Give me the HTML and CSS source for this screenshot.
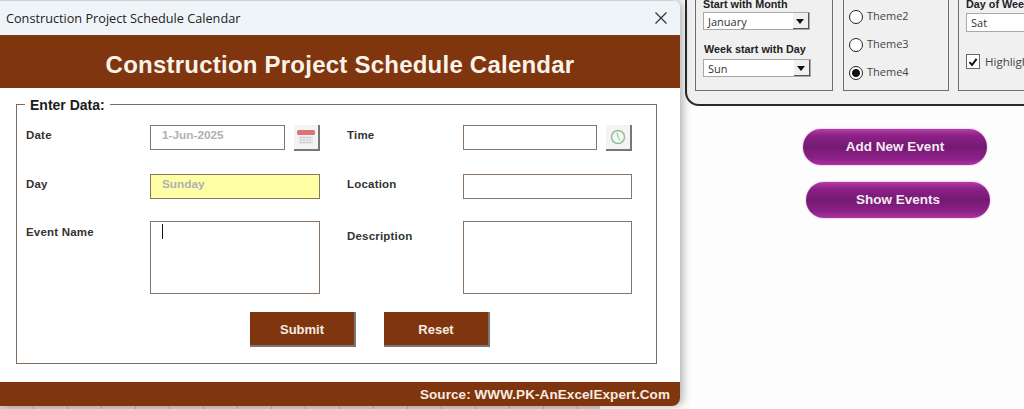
FILE: index.html
```html
<!DOCTYPE html>
<html lang="en">
<head>
<meta charset="utf-8">
<title>Construction Project Schedule Calendar</title>
<link rel="stylesheet" href="styles.css">
</head>
<body>
<div class="desk">
  <div class="sheet-strip"></div>

  <section class="panel">
    <div class="group group-month">
      <div class="cap">Start with Month</div>
      <div class="combo"><span>January</span><i class="drop"></i></div>
      <div class="cap cap-second">Week start with Day</div>
      <div class="combo combo-second"><span>Sun</span><i class="drop"></i></div>
    </div>
    <div class="group group-theme">
      <div class="radio"><i class="dot"></i><span class="radio-text">Theme2</span></div>
      <div class="radio"><i class="dot"></i><span class="radio-text">Theme3</span></div>
      <div class="radio"><i class="dot on"></i><span class="radio-text">Theme4</span></div>
    </div>
    <div class="group group-week">
      <div class="cap">Day of Week</div>
      <div class="combo combo-wide"><span>Sat</span></div>
      <div class="check"><i class="box"><svg width="10" height="10" viewBox="0 0 10 10"><path d="M1.5 5.2 4 8 8.6 1.8" fill="none" stroke="#111" stroke-width="2"/></svg></i>Highlight</div>
    </div>
  </section>

  <div class="pill pill-add">Add New Event</div>
  <div class="pill pill-show">Show Events</div>

  <main class="dialog">
    <header class="titlebar">
      <span>Construction Project Schedule Calendar</span>
      <svg class="close" width="12" height="12" viewBox="0 0 12 12"><path d="M.5.5l11 11M11.5.5l-11 11" stroke="#333" stroke-width="1.2" fill="none"/></svg>
    </header>
    <h1 class="banner">Construction Project Schedule Calendar</h1>
    <div class="content">
      <div class="frame">
        <div class="legend">Enter Data:</div>
        <div class="form">
          <label class="lbl">Date</label>
          <div class="field-row">
            <div class="input input-date">1-Jun-2025</div>
            <div class="pick">
              <svg width="18" height="20" viewBox="0 0 18 20"><rect x="0" y="3" width="18" height="16" fill="#f3f1f1"/><rect x="0" y="3" width="18" height="5" rx="1.5" fill="#dc7473"/><path d="M2 10.500h14M2 13h14M2 15.500h14M4 9v8M7 9v8M10 9v8M13 9v8" stroke="#d0d0d8" stroke-width="1"/></svg>
            </div>
          </div>
          <label class="lbl">Time</label>
          <div class="field-row">
            <div class="input input-time"></div>
            <div class="pick">
              <svg width="18" height="18" viewBox="0 0 18 18"><circle cx="9" cy="9" r="6.500" fill="#f4f9f3" stroke="#93c09a" stroke-width="1.500"/><path d="M8 4.500 9 9l2 3.500" stroke="#93c09a" stroke-width="1" fill="none"/></svg>
            </div>
          </div>

          <label class="lbl">Day</label>
          <div class="input input-day">Sunday</div>
          <label class="lbl">Location</label>
          <div class="input input-loc"></div>

          <label class="lbl lbl-event">Event Name</label>
          <div class="input area"><i class="caret"></i></div>
          <label class="lbl lbl-desc">Description</label>
          <div class="input area input-loc"></div>
        </div>
        <div class="actions">
          <div class="btn">Submit</div>
          <div class="btn">Reset</div>
        </div>
      </div>
    </div>
    <footer class="source">Source: WWW.PK-AnExcelExpert.Com</footer>
  </main>
</div>
</body>
</html>
```
FILE: styles.css
```css
* { box-sizing: border-box; }
html, body { margin: 0; padding: 0; }
body { background: #fff; font-family: "Liberation Sans", Arial, sans-serif; }

.desk { position: relative; width: 1024px; height: 409px; overflow: hidden; background: #fdfdfd; }

.sheet-strip {
  position: absolute; left: 0; bottom: 0; width: 600px; height: 4px;
  background: repeating-linear-gradient(90deg, #d6d2ca 0 33px, #b4aea4 33px 34px);
}

/* Background worksheet panel */
.panel {
  position: absolute; left: 685px; top: -12px; width: 380px; height: 118px;
  background: #f0f0f0; border: 2px solid #2a2a2a; border-radius: 0 0 0 14px;
  display: flex; gap: 10px; padding: 0 0 0 8px;
}
.group { height: 101px; border: 1px solid #6e6e6e; border-top: 0; flex: none; font-size: 11px; color: #222; }
.group-month { width: 138px; padding: 7px 0 0 7px; }
.group-theme { width: 106px; padding: 19px 0 0 5px; display: flex; flex-direction: column; gap: 12px; }
.group-week { width: 100px; margin-left: -1px; padding: 7px 0 0 7px; }
.cap { font-weight: bold; font-size: 10.800px; line-height: 14px; color: #222; }
.cap-second { margin: 12px 0 0 1px; }
.combo {
  width: 107px; height: 18px; margin-top: 1px; background: #fff; border: 1px solid #a8a8a8;
  display: flex; justify-content: space-between; align-items: center;
  padding-left: 4px; font: 11px "Open Sans", sans-serif; color: #333;
}
.combo-second { margin-top: 3px; width: 108px; }
.combo-wide { width: 90px; height: 19px; margin-top: 2px; }
.drop {
  width: 16px; height: 16px; background: #f0f0f0; flex: none; position: relative;
  border-right: 1px solid #555; border-bottom: 1px solid #555;
}
.drop::after {
  content: ""; position: absolute; left: 3px; top: 6px;
  border: 4px solid transparent; border-top: 5px solid #111; border-bottom: 0;
}
.radio { display: flex; align-items: center; gap: 4px; height: 16px; font: 11px/14px "Open Sans", sans-serif; color: #444; }
.radio-text { margin-top: -2px; }
.dot { width: 14px; height: 14px; border: 1px solid #222; border-radius: 50%; background: #fff; display: block; flex: none; }
.dot.on { background: radial-gradient(circle, #111 0 3.500px, #fff 4.500px); }
.check { display: flex; align-items: center; gap: 5px; margin-top: 22px; font: 11.500px "Open Sans", sans-serif; color: #444; white-space: nowrap; }
.box { width: 14px; height: 15px; border: 1px solid #666; background: #fff; display: flex; align-items: center; justify-content: center; flex: none; }

/* Purple buttons */
.pill {
  position: absolute; width: 184px; height: 36px; border-radius: 18px; padding-bottom: 2px;
  display: flex; align-items: center; justify-content: center;
  color: #f6e9f5; font-size: 13.500px; font-weight: bold;
  background: linear-gradient(180deg, #b53ea8 0, #8d2188 18%, #741a72 50%, #8d2188 82%, #a8359f 100%);
  box-shadow: 0 0 2px #d88bd2;
}
.pill-add { left: 803px; top: 129px; }
.pill-show { left: 806px; top: 182px; }

/* Dialog window */
.dialog {
  position: absolute; left: 0; top: 0; width: 680px; height: 406px;
  background: #fff; border-radius: 0 8px 8px 0;
  box-shadow: 3px 0 9px rgba(0, 0, 0, .3);
  display: flex; flex-direction: column; overflow: hidden;
}
.titlebar {
  height: 35px; flex: none; background: #eff4f9; display: flex; align-items: center;
  justify-content: space-between; padding: 0 13px 0 6px;
  border-top: 1px solid #d4d2ce;
  font: 12.700px "Open Sans", sans-serif; color: #222;
}
.banner {
  margin: 0; height: 53px; flex: none; background: #7f360e; color: #fbf3ea;
  display: flex; align-items: center; justify-content: center;
  font-size: 24px; font-weight: bold; letter-spacing: .23px; padding-top: 7px;
}
.content { flex: 1; padding: 16px 23px 18px 16px; }
.frame { position: relative; height: 260px; border: 1px solid #7c6a5e; padding: 20px 0 0 9px; }
.legend {
  position: absolute; left: 8px; top: -8px; background: #fff; padding: 0 5px;
  font-size: 14px; font-weight: bold; line-height: 17px; color: #1c1c1c;
}
.form { display: grid; grid-template-columns: 124px 197px 116px 169px; grid-template-rows: 49px 47px 73px; }
.lbl { font-size: 11.500px; font-weight: bold; color: #333; padding-top: 4px; letter-spacing: .2px; }
.lbl-event { padding-top: 5px; }
.lbl-desc { padding-top: 9px; }
.field-row { display: flex; gap: 9px; align-items: flex-start; }
.input { height: 25px; border: 1px solid #8a7565; background: #fff; width: 170px; font-size: 11.800px; font-weight: bold; color: #b0b0b0; padding: 2px 0 0 11px; }
.input-date { width: 135px; }
.input-time { width: 134px; }
.input-day { background: #ffffa6; }
.input-loc { width: 169px; }
.area { height: 73px; position: relative; }
.caret { position: absolute; left: 11px; top: 2px; width: 1px; height: 15px; background: #111; }
.pick {
  width: 26px; height: 26px; flex: none; background: #f4f4f4;
  border-right: 2px solid #777; border-bottom: 2px solid #777;
  display: flex; align-items: center; justify-content: center;
}
.actions { display: flex; gap: 28px; margin: 18px 0 0 224px; }
.btn {
  width: 106px; height: 35px; background: #7f360e; color: #f6ece2;
  border-right: 2px solid #777; border-bottom: 2px solid #777; padding-top: 2px;
  display: flex; align-items: center; justify-content: center;
  font-size: 13px; font-weight: bold;
}
.source {
  height: 24px; flex: none; background: #7f360e; color: #f6ece2;
  display: flex; align-items: center; justify-content: flex-end; padding-right: 10px;
  font-size: 13.500px; font-weight: bold; letter-spacing: .08px;
}
```
